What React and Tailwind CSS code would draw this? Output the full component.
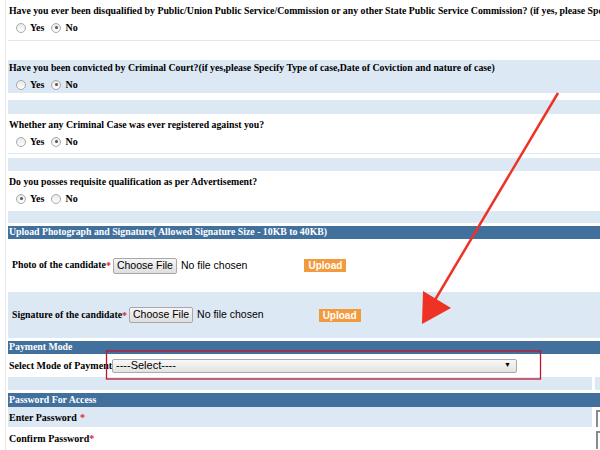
import React from 'react';

const serif = { fontFamily: '"Liberation Serif", "Times New Roman", serif' };
const sans = { fontFamily: '"Liberation Sans", Arial, sans-serif' };

function Radio({ checked }) {
  return (
    <span className="inline-flex w-[10px] h-[10px] rounded-full border border-[#a9a9a9] bg-gradient-to-b from-[#e8e8e8] to-white items-center justify-center mr-[4px]">
      {checked && <span className="w-[3px] h-[3px] rounded-full bg-[#555]" />}
    </span>
  );
}

function YesNo({ value }) {
  return (
    <div className="flex items-center pl-[8px] font-bold text-[10px] text-black">
      <Radio checked={value === 'yes'} />
      <span className="mr-[7px]">Yes</span>
      <Radio checked={value === 'no'} />
      <span>No</span>
    </div>
  );
}

function Question({ text, value, blue, h, pt }) {
  return (
    <div className={`${blue ? 'bg-[#dde8f5]' : 'bg-white'} ${h} ${pt} flex flex-col gap-[4px]`}>
      <div className="pl-[1px] font-bold text-[9.8px] leading-[11px] whitespace-nowrap">{text}</div>
      <YesNo value={value} />
    </div>
  );
}

function Header({ children, h }) {
  return (
    <div className={`bg-[#41709d] ${h} flex items-center pl-[1px] text-white font-bold text-[9.8px] whitespace-nowrap`}>
      {children}
    </div>
  );
}

function FileRow({ label, h, blue, uploadGap }) {
  return (
    <div className={`${blue ? 'bg-[#dde8f5]' : 'bg-white'} ${h} flex items-center pl-[4px]`}>
      <span className="font-bold text-[9.8px]">{label}</span>
      <span className="text-[#e0202a] font-bold text-[10px] mr-[2px]">*</span>
      <span
        className="h-[16px] w-[64px] flex items-center justify-center border border-[#a8a8a8] rounded-[2px] bg-gradient-to-b from-[#f6f6f6] to-[#dedede] text-[10.5px] text-black"
        style={sans}
      >
        Choose File
      </span>
      <span className="ml-[4px] text-[10.5px] text-black" style={sans}>
        No file chosen
      </span>
      <span
        className={`${uploadGap} h-[13px] w-[42px] flex items-center justify-center bg-[#f39a3c] text-white font-bold text-[10px]`}
        style={sans}
      >
        Upload
      </span>
    </div>
  );
}

export default function App() {
  return (
    <div className="relative w-[600px] h-[450px] overflow-hidden bg-white text-black" style={serif}>
      <div className="absolute left-[5px] top-0 bottom-0 w-px bg-[#e6e6e6]" />
      <div className="pl-[8px] flex flex-col">
        <Question
          h="h-[40px]"
          pt="pt-[5px]"
          value="no"
          text="Have you ever been disqualified by Public/Union Public Service/Commission or any other State Public Service Commission? (if yes, please Specify"
        />
        <div className="h-px bg-[#dde8f5]" />
        <div className="h-[19px]" />
        <Question
          blue
          h="h-[33px]"
          pt="pt-[2px]"
          value="no"
          text="Have you been convicted by Criminal Court?(if yes,please Specify Type of case,Date of Coviction and nature of case)"
        />
        <div className="h-[7px]" />
        <div className="h-[14px] bg-[#dde8f5]" />
        <Question h="h-[39px]" pt="pt-[5px]" value="no" text="Whether any Criminal Case was ever registered against you?" />
        <div className="h-px bg-[#dde8f5]" />
        <div className="h-[4px]" />
        <div className="h-[13px] bg-[#dde8f5]" />
        <Question h="h-[40px]" pt="pt-[5px]" value="yes" text="Do you posses requisite qualification as per Advertisement?" />
        <div className="h-[12px] bg-[#dde8f5]" />
        <div className="h-[3px]" />
        <Header h="h-[13px]">Upload Photograph and Signature( Allowed Signature Size - 10KB to 40KB)</Header>
        <FileRow label="Photo of the candidate" h="h-[53px]" uploadGap="ml-[57px]" />
        <FileRow label="Signature of the candidate" h="h-[46px]" blue uploadGap="ml-[55px]" />
        <div className="h-[3px]" />
        <Header h="h-[13px]">Payment Mode</Header>
        <div className="h-[23px] flex items-center pl-px">
          <span className="font-bold text-[10px] whitespace-nowrap w-[103px] overflow-hidden">Select Mode of Payment</span>
          <div
            className="w-[405px] h-[14px] flex items-center justify-between pl-[3px] pr-[5px] border border-[#a9a9a9] rounded-[2px] bg-gradient-to-b from-[#f8f8f8] to-[#e2e2e2] text-[11px]"
            style={sans}
          >
            <span>----Select----</span>
            <span className="text-[7px]">▼</span>
          </div>
        </div>
        <div className="h-[13px] flex gap-[3px]">
          <div className="w-[584px] bg-[#dde8f5]" />
          <div className="flex-1 bg-[#dde8f5]" />
        </div>
        <div className="h-[3px]" />
        <Header h="h-[14px]">Password For Access</Header>
        <div className="h-[20px] flex">
          <div className="w-[584px] bg-[#dde8f5] flex items-center pl-px font-bold text-[10px]">
            Enter Password <span className="text-[#e0202a] ml-[3px]">*</span>
          </div>
          <div className="flex-1 pl-[4px] pt-[3px]">
            <div className="h-[17px] border-l-2 border-t-2 border-[#8a8a8a]" />
          </div>
        </div>
        <div className="h-[22px] flex">
          <div className="w-[584px] flex items-center pl-px font-bold text-[10px]">
            Confirm Password<span className="text-[#e0202a]">*</span>
          </div>
          <div className="flex-1 pl-[4px] pt-[4px]">
            <div className="h-[18px] border-l-2 border-t-2 border-[#8a8a8a]" />
          </div>
        </div>
      </div>

      <svg className="absolute inset-0 pointer-events-none" width="600" height="450" viewBox="0 0 600 450">
        <rect x="106.5" y="351" width="434" height="28" fill="none" stroke="#c0142c" strokeWidth="1.3" />
        <line x1="558" y1="93" x2="432" y2="305" stroke="#ee3224" strokeWidth="2.5" />
        <polygon points="423,291 451,308 422,324" fill="#ee3224" />
      </svg>
    </div>
  );
}
